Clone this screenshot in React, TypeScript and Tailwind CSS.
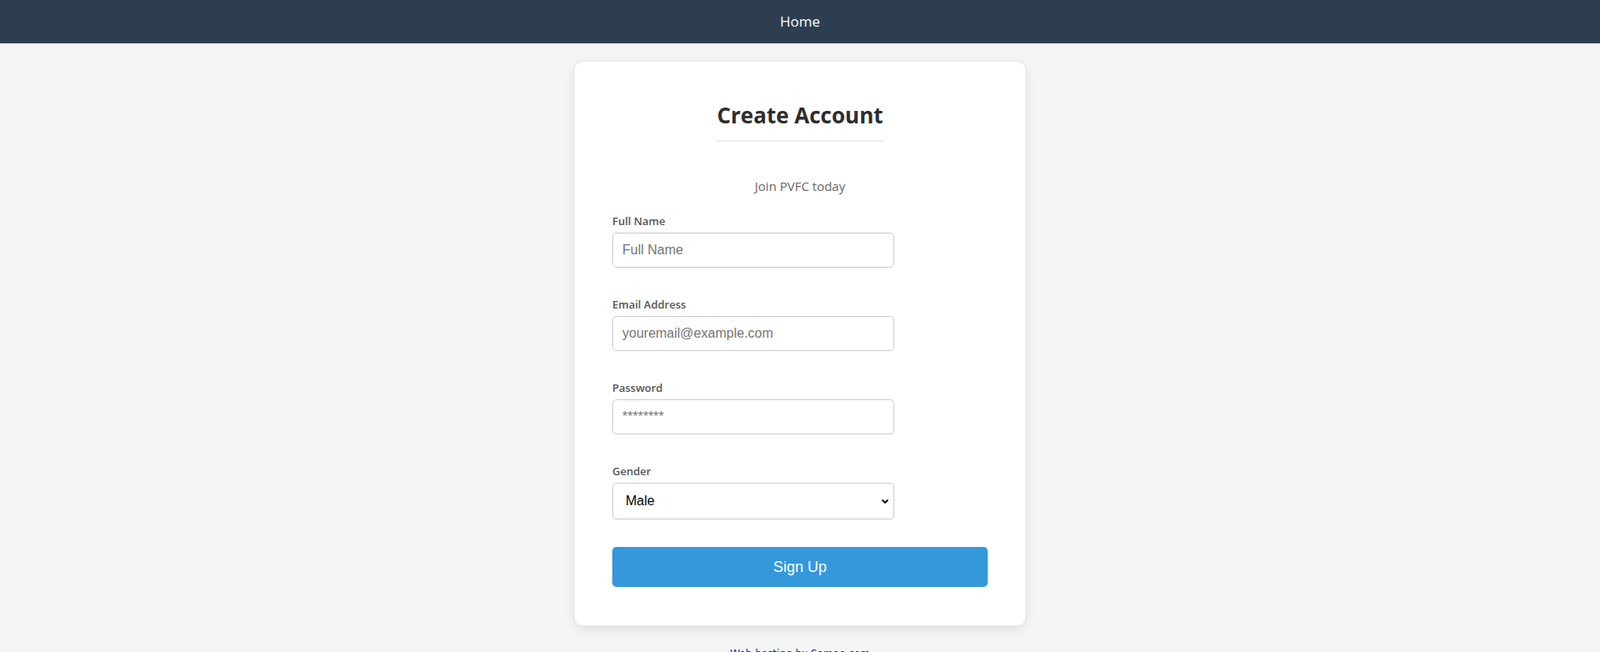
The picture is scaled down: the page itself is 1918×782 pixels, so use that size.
import * as React from "react"

const fields = [
  { id: "fullName", label: "Full Name", type: "text", placeholder: "Full Name" },
  { id: "email", label: "Email Address", type: "email", placeholder: "youremail@example.com" },
  { id: "password", label: "Password", type: "password", placeholder: "********" },
]

export default function App() {
  const [gender, setGender] = React.useState("Male")

  return (
    <div className="min-h-screen bg-[#f4f6f6] font-['Open_Sans',sans-serif]">
      {/* Top nav */}
      <header className="flex h-[52px] items-center justify-center bg-[#2c3e50]">
        <a href="#" className="text-[17px] text-white">
          Home
        </a>
      </header>

      <main className="flex flex-col items-center pt-[21px]">
        <div className="w-[542px] rounded-[10px] border border-[#e6e8e8] bg-white px-[45px] pb-[46px] pt-[45px] shadow-[0_4px_14px_rgba(0,0,0,0.09)]">
          <div className="text-center">
            <h2 className="inline-block border-b-2 border-[#ededed] pb-[11px] text-[26px] font-bold leading-[38px] text-[#2d2d2d]">
              Create Account
            </h2>
          </div>
          <p className="mt-[41px] text-center text-[15px] leading-[24px] text-[#666]">Join PVFC today</p>

          <form className="mt-[20px]" onSubmit={(e) => e.preventDefault()}>
            {fields.map((f) => (
              <div key={f.id} className="mb-[34px]">
                <label htmlFor={f.id} className="mb-[4px] block text-[13px] font-semibold leading-[20px] text-[#555]">
                  {f.label}
                </label>
                <input
                  id={f.id}
                  type={f.type}
                  placeholder={f.placeholder}
                  className="block h-[42px] w-3/4 rounded-[5px] border border-[#ccc] px-[11px] font-['Liberation_Sans',Arial,sans-serif] text-[16px] text-[#333] placeholder:text-[#757575] outline-none"
                />
              </div>
            ))}

            <div>
              <label htmlFor="gender" className="mb-[4px] block text-[13px] font-semibold leading-[20px] text-[#555]">
                Gender
              </label>
              <div className="relative w-3/4">
                <select
                  id="gender"
                  value={gender}
                  onChange={(e) => setGender(e.target.value)}
                  className="block h-[44px] w-full appearance-none rounded-[5px] border border-[#ccc] bg-white px-[15px] font-['Liberation_Sans',Arial,sans-serif] text-[16px] text-black outline-none"
                >
                  <option>Male</option>
                  <option>Female</option>
                  <option>Other</option>
                </select>
                <svg
                  className="pointer-events-none absolute right-[6px] top-1/2 h-[10px] w-[10px] -translate-y-1/2"
                  viewBox="0 0 10 10"
                  fill="none"
                  stroke="#111"
                  strokeWidth="2"
                >
                  <path d="M1.5 3.5 5 6.8 8.5 3.5" />
                </svg>
              </div>
            </div>

            <button
              type="submit"
              className="mt-[33px] h-[48px] w-full rounded-[5px] bg-[#3498db] font-['Liberation_Sans',Arial,sans-serif] text-[18px] text-white"
            >
              Sign Up
            </button>
          </form>
        </div>

        <a href="#" className="mt-[26px] font-['DejaVu_Sans',Tahoma,sans-serif] text-[12px] leading-[14px] text-[#1a0fb0]">
          Web hosting by Somee.com
        </a>
      </main>
    </div>
  )
}
